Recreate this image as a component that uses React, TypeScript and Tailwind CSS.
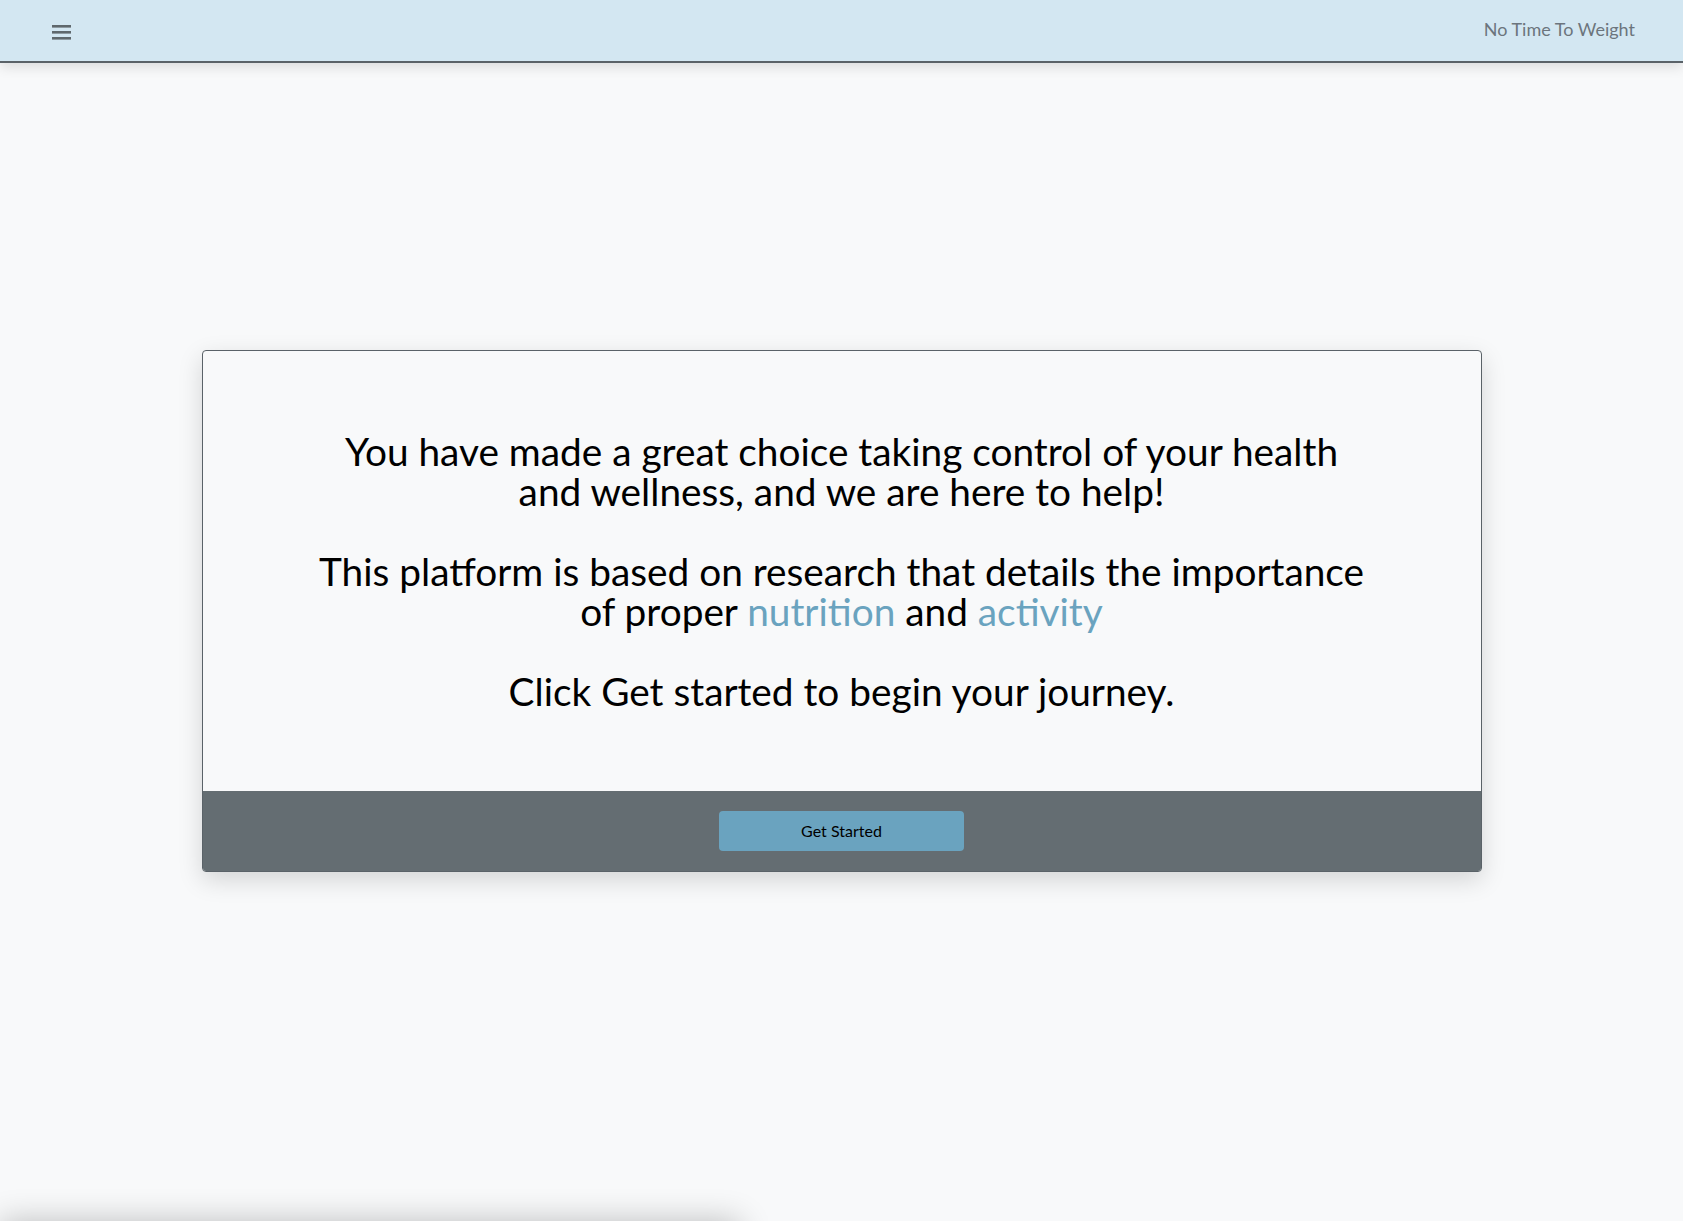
import React from "react";

function MenuIcon() {
    return (
        <svg width="19" height="16" viewBox="0 0 19 16" aria-hidden="true">
            <rect x="0" y="1" width="19" height="2.6" fill="#5f686d" />
            <rect x="0" y="7" width="19" height="2.6" fill="#5f686d" />
            <rect x="0" y="13" width="19" height="2.6" fill="#5f686d" />
        </svg>
    );
}

export default function App() {
    return (
        <div className="min-h-screen bg-[#f8f9fa] flex flex-col overflow-hidden" style={{ fontFamily: "Lato, 'Noto Sans', sans-serif" }}>
            <header className="h-[63px] bg-[#d3e7f2] border-b-2 border-[#5a6268] shadow-[0_4px_12px_rgba(0,0,0,0.12)] flex items-center justify-between pl-[52px] pr-[48px] shrink-0">
                <button className="flex items-center mt-[3px]" aria-label="Menu">
                    <MenuIcon />
                </button>
                <span className="text-[18px] text-[#6c757d] -mt-[3px]">No Time To Weight</span>
            </header>

            <main className="flex-1 flex justify-center pt-[287px]">
                <div className="w-[1280px] h-[522px] border border-[#5a6268] rounded-[4px] overflow-hidden shadow-[0_8px_24px_rgba(0,0,0,0.15)] flex flex-col bg-[#f8f9fa]">
                    <div className="flex-1 flex items-center justify-center">
                        <p className="text-center text-[38.8px] leading-[40px] text-black">
                            You have made a great choice taking control of your health
                            <br />
                            and wellness, and we are here to help!
                            <br />
                            <br />
                            This platform is based on research that details the importance
                            <br />
                            of proper <span className="text-[#6aa3bf]">nutrition</span> and{" "}
                            <span className="text-[#6aa3bf]">activity</span>
                            <br />
                            <br />
                            Click Get started to begin your journey.
                        </p>
                    </div>
                    <div className="h-[80px] bg-[#646d72] flex items-center justify-center shrink-0">
                        <button className="w-[245px] h-[40px] rounded-[4px] bg-[#6aa3bf] text-[16px] text-black">
                            Get Started
                        </button>
                    </div>
                </div>
            </main>

            <div className="fixed left-0 -bottom-[40px] w-[740px] h-[40px] bg-[#f8f9fa] shadow-[0_0_32px_rgba(0,0,0,0.24)]" />
        </div>
    );
}
